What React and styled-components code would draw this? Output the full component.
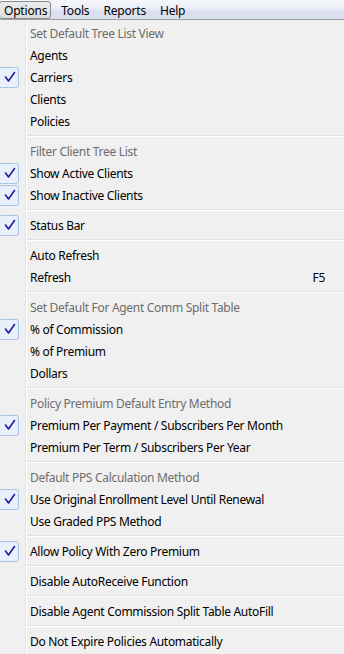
import React from 'react';
import styled, { createGlobalStyle } from 'styled-components';

const GlobalStyle = createGlobalStyle`
  html, body { margin: 0; padding: 0; background: #f0f0f0; }
  body { font-family: "Noto Sans", "Open Sans", sans-serif; font-size: 12px; letter-spacing: -0.3px; }
`;

const menus = ['Options', 'Tools', 'Reports', 'Help'];

const items = [
    { type: 'header', label: 'Set Default Tree List View' },
    { label: 'Agents' },
    { label: 'Carriers', checked: true },
    { label: 'Clients' },
    { label: 'Policies' },
    { type: 'sep' },
    { type: 'header', label: 'Filter Client Tree List' },
    { label: 'Show Active Clients', checked: true },
    { label: 'Show Inactive Clients', checked: true },
    { type: 'sep' },
    { label: 'Status Bar', checked: true },
    { type: 'sep' },
    { label: 'Auto Refresh' },
    { label: 'Refresh', shortcut: 'F5' },
    { type: 'sep' },
    { type: 'header', label: 'Set Default For Agent Comm Split Table' },
    { label: '% of Commission', checked: true },
    { label: '% of Premium' },
    { label: 'Dollars' },
    { type: 'sep' },
    { type: 'header', label: 'Policy Premium Default Entry Method' },
    { label: 'Premium Per Payment / Subscribers Per Month', checked: true },
    { label: 'Premium Per Term / Subscribers Per Year' },
    { type: 'sep' },
    { type: 'header', label: 'Default PPS Calculation Method' },
    { label: 'Use Original Enrollment Level Until Renewal', checked: true },
    { label: 'Use Graded PPS Method' },
    { type: 'sep' },
    { label: 'Allow Policy With Zero Premium', checked: true },
    { type: 'sep' },
    { label: 'Disable AutoReceive Function' },
    { type: 'sep' },
    { label: 'Disable Agent Commission Split Table AutoFill' },
    { type: 'sep' },
    { label: 'Do Not Expire Policies Automatically' },
];

const CheckIcon = () => (
    <svg width="12" height="12" viewBox="0 0 12 12">
        <path d="M1.5 6 L4.5 10 L10.5 1.5" fill="none" stroke="#1e1e9a" strokeWidth="1.6" strokeLinejoin="round" strokeLinecap="round" />
    </svg>
);

const App = () => {
    return (
        <Screen>
            <GlobalStyle />
            <MenuBar>
                {menus.map((m, i) => (
                    <MenuTab key={m} active={i === 0}>{m}</MenuTab>
                ))}
            </MenuBar>
            <Dropdown>
                {items.map((it, i) => {
                    if (it.type === 'sep') return <Separator key={i} />;
                    return (
                        <Row key={i}>
                            <Gutter>
                                {it.checked && <CheckBox><CheckIcon /></CheckBox>}
                            </Gutter>
                            <Label header={it.type === 'header'}>{it.label}</Label>
                            <Shortcut>{it.shortcut}</Shortcut>
                        </Row>
                    );
                })}
            </Dropdown>
        </Screen>
    );
};

const Screen = styled.div`
    width: 344px;
    height: 654px;
    overflow: hidden;
    background: #f0f0f0;
`;

const MenuBar = styled.div`
    display: flex;
    align-items: center;
    height: 19px;
    background: linear-gradient(to bottom, #f6f7fb 0%, #eceff8 40%, #dbe0f1 60%, #d9def0 100%);
    border-bottom: 1px solid #a0a0a0;
    color: #000;
`;

const MenuTab = styled.div`
    height: 18px;
    line-height: 17px;
    padding: 0 3px 0 4px;
    margin-right: 5px;
    box-sizing: border-box;
    border: 1px solid ${p => p.active ? '#8a8c90' : 'transparent'};
    border-radius: 3px;
    background: ${p => p.active ? 'linear-gradient(to bottom, #ececec, #dcdcdc)' : 'transparent'};
    font-size: 12px;
    letter-spacing: -0.2px;
    &:first-child { margin-left: -1px; }
`;

const Dropdown = styled.div`
    padding-top: 2px;
    height: 634px;
    background:
        linear-gradient(to right,
            #f0f0f0 0, #f0f0f0 25px,
            #e2e3e3 25px, #e2e3e3 26px,
            #ffffff 26px, #ffffff 27px,
            #f0f0f0 27px);
`;

const Row = styled.div`
    display: grid;
    grid-template-columns: 27px 1fr auto;
    align-items: center;
    height: 22px;
`;

const Gutter = styled.div`
    height: 22px;
    display: flex;
    align-items: center;
`;

const CheckBox = styled.div`
    width: 21px;
    height: 21px;
    margin-left: -2px;
    box-sizing: border-box;
    border: 1px solid #a9c3e6;
    border-radius: 3px;
    background: #e8f0fb;
    display: flex;
    align-items: center;
    justify-content: center;
    padding-left: 2px;
`;

const Label = styled.div`
    padding-left: 3px;
    color: ${p => p.header ? '#6d6d6d' : '#000'};
    white-space: nowrap;
`;

const Shortcut = styled.div`
    padding-right: 19px;
    color: #000;
`;

const Separator = styled.div`
    height: 8px;
    margin-left: 27px;
    display: flex;
    flex-direction: column;
    justify-content: center;
    &::before {
        content: '';
        display: block;
        height: 1px;
        background: #e0e0e0;
    }
    &::after {
        content: '';
        display: block;
        height: 1px;
        background: #ffffff;
    }
`;

export default App;
